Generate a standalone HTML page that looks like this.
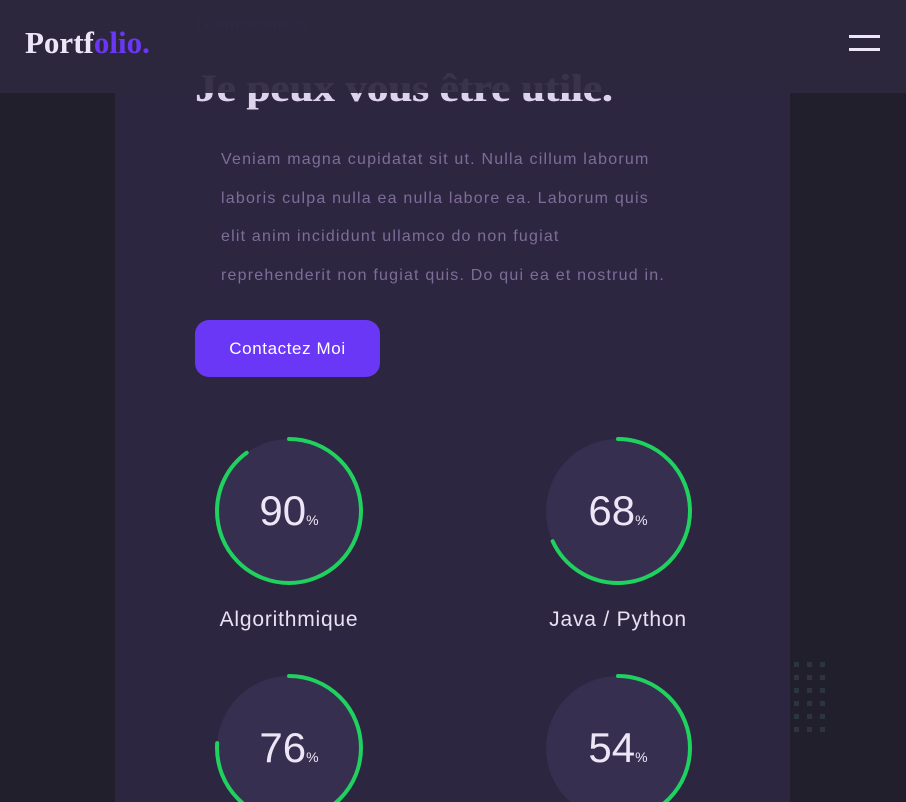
<!DOCTYPE html>
<html><head><meta charset="utf-8"><style>
*{margin:0;padding:0;box-sizing:border-box}
html,body{width:906px;height:802px;overflow:hidden}
body{background:#221f2d;font-family:"Liberation Sans",sans-serif;position:relative}
.panel{position:absolute;left:115px;top:0;width:675px;height:802px;background:#2d2640}
.hdr{position:absolute;left:0;top:0;width:906px;height:93px;background:rgba(45,40,62,0.93)}
.logo{position:absolute;left:25px;top:25px;font-family:"Liberation Serif",serif;font-weight:bold;font-size:31px;color:#ece6f7;letter-spacing:0px}
.logo span{color:#6b37f7}
.burger{position:absolute;left:849px;top:35px;width:31px}
.burger i{display:block;height:3px;background:#ece6f7;margin-bottom:10px}
.faded{position:absolute;left:196px;top:12px;font-family:"Liberation Serif",serif;font-size:20px;color:#3f3853}
h1{position:absolute;left:195px;top:66px;font-family:"Liberation Serif",serif;font-weight:bold;font-size:39px;color:#ddd3ec;transform:scaleX(1.1);transform-origin:left;white-space:nowrap;text-shadow:0.6px 0 0 #ddd3ec}
p{position:absolute;left:221px;top:141px;width:520px;font-size:16px;letter-spacing:1.2px;line-height:38.5px;color:#7d6d98;white-space:nowrap}
.btn{position:absolute;left:195px;top:320px;width:185px;height:57px;background:#6b37f7;border-radius:14px;color:#fff;font-size:17px;letter-spacing:0.6px;text-align:center;line-height:57px}
.sk{position:absolute;width:160px;text-align:center;color:#e8e1f4}
.sk svg{display:block;margin:0 auto}
.num{position:absolute;left:0;width:160px;text-align:center;font-size:42px;color:#ece6f7}
.num small{font-size:14px}
.lbl{font-size:21px;letter-spacing:0.8px;margin-top:22px;white-space:nowrap;margin-left:-20px;margin-right:-20px}
.dots{position:absolute;left:794px;top:662px}
.dots i{position:absolute;width:5px;height:5px;background:#2c3442}
</style></head><body>
<div class="panel"></div>
<div class="faded">| compétences</div>
<h1>Je peux vous être utile.</h1>
<div class="hdr"></div>
<div class="logo">Portf<span>olio.</span></div>
<div class="burger"><i></i><i></i></div>
<p>Veniam magna cupidatat sit ut. Nulla cillum laborum<br>laboris culpa nulla ea nulla labore ea. Laborum quis<br>elit anim incididunt ullamco do non fugiat<br>reprehenderit non fugiat quis. Do qui ea et nostrud in.</p>
<div class="btn">Contactez Moi</div>

<div class="sk" style="left:209px;top:436px"><svg width="150" height="150"><circle cx="75" cy="75" r="72" fill="#372f4f"/><circle cx="75" cy="75" r="72" fill="none" stroke="#1fd15e" stroke-width="4" stroke-linecap="round" stroke-dasharray="407 453" transform="rotate(-90 75 75)"/></svg><div class="num" style="top:51px">90<small>%</small></div><div class="lbl">Algorithmique</div></div>
<div class="sk" style="left:538px;top:436px"><svg width="150" height="150"><circle cx="75" cy="75" r="72" fill="#372f4f"/><circle cx="75" cy="75" r="72" fill="none" stroke="#1fd15e" stroke-width="4" stroke-linecap="round" stroke-dasharray="308 453" transform="rotate(-90 75 75)"/></svg><div class="num" style="top:51px">68<small>%</small></div><div class="lbl">Java / Python</div></div>
<div class="sk" style="left:209px;top:673px"><svg width="150" height="150"><circle cx="75" cy="75" r="72" fill="#372f4f"/><circle cx="75" cy="75" r="72" fill="none" stroke="#1fd15e" stroke-width="4" stroke-linecap="round" stroke-dasharray="344 453" transform="rotate(-90 75 75)"/></svg><div class="num" style="top:51px">76<small>%</small></div></div>
<div class="sk" style="left:538px;top:673px"><svg width="150" height="150"><circle cx="75" cy="75" r="72" fill="#372f4f"/><circle cx="75" cy="75" r="72" fill="none" stroke="#1fd15e" stroke-width="4" stroke-linecap="round" stroke-dasharray="245 453" transform="rotate(-90 75 75)"/></svg><div class="num" style="top:51px">54<small>%</small></div></div>

<div class="dots">
<i style="left:0;top:0"></i><i style="left:13px;top:0"></i><i style="left:26px;top:0"></i>
<i style="left:0;top:13px"></i><i style="left:13px;top:13px"></i><i style="left:26px;top:13px"></i>
<i style="left:0;top:26px"></i><i style="left:13px;top:26px"></i><i style="left:26px;top:26px"></i>
<i style="left:0;top:39px"></i><i style="left:13px;top:39px"></i><i style="left:26px;top:39px"></i>
<i style="left:0;top:52px"></i><i style="left:13px;top:52px"></i><i style="left:26px;top:52px"></i>
<i style="left:0;top:65px"></i><i style="left:13px;top:65px"></i><i style="left:26px;top:65px"></i>
</div>
</body></html>
